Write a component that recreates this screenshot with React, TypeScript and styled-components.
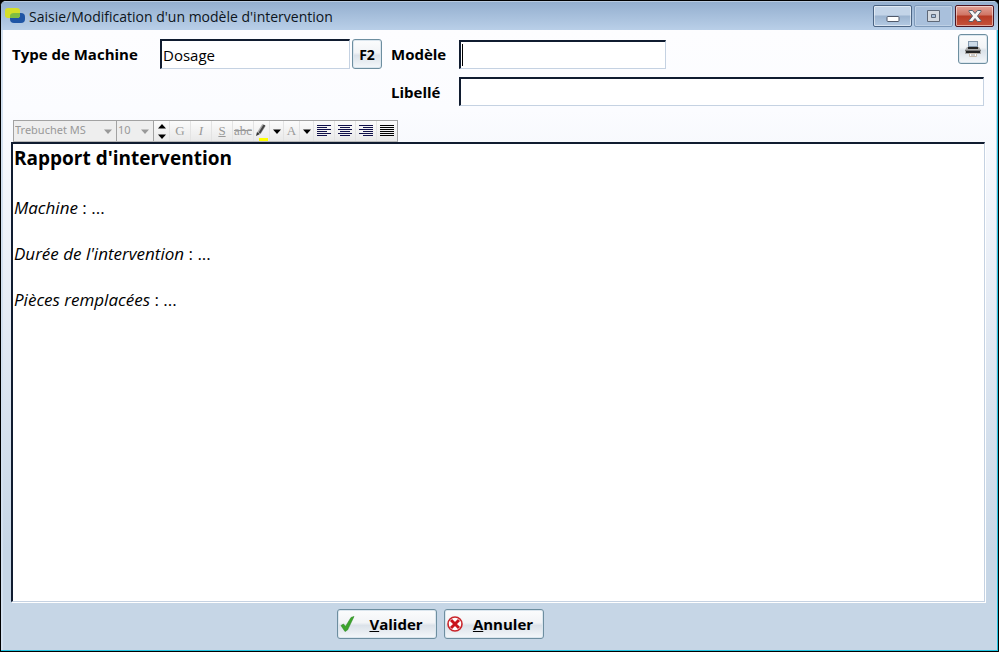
import React from "react";
import styled, { createGlobalStyle, css } from "styled-components";

const Global = createGlobalStyle`
  * { box-sizing: border-box; }
  html, body { margin: 0; background: #000; }
  body { font-family: "Open Sans", "Noto Sans", sans-serif; font-size: 15px; color: #000; }
  button, input, select { font-family: inherit; color: inherit; margin: 0; }
`;

const Window = styled.div`
  display: flex;
  flex-direction: column;
  height: 100vh;
  border: 1px solid #000;
  border-radius: 6px 6px 0 0;
  overflow: hidden;
  background: #c6d6e6;
  box-shadow: inset -1px -1px #22c3e0;
`;

const TitleBar = styled.header`
  display: flex;
  align-items: center;
  height: 29px;
  flex: none;
  gap: 2px;
  padding: 0 4px;
  border-top: 1px solid #b9cbe0;
  background: linear-gradient(#94afcf, #b9cfe8);
`;

const TitleText = styled.h1`
  flex: 1;
  margin: 0;
  padding-top: 2px;
  font-size: 14px;
  line-height: 20px;
  font-weight: 400;
  color: #0c1420;
`;

const Captions = styled.div`
  display: flex;
  align-self: flex-start;
  gap: 2px;
  padding-top: 3px;
`;

const CaptionButton = styled.button<{ $tone?: "close" | "dim" }>`
  display: flex;
  align-items: center;
  justify-content: center;
  width: 39px;
  height: 22px;
  padding: 0;
  border: 1px solid #4b6483;
  border-radius: 2px;
  box-shadow: inset 0 0 0 1px #ffffff80;
  background: linear-gradient(#c3d4e8 45%, #9cb4d0 50%, #b4cae3);
  ${(p) => p.$tone === "dim" && css`
    border-color: #7f9aba;
    background: #a9c0dc;
    box-shadow: inset 0 0 0 1px #ffffff40;
  `}
  ${(p) => p.$tone === "close" && css`
    border-color: #4d1420;
    background: linear-gradient(#e3a297, #d07565 45%, #b73b25 50%, #c5523c);
  `}
`;

const Content = styled.main`
  display: flex;
  flex-direction: column;
  flex: 1;
  min-height: 0;
  margin: 0 2px 1px 0;
  border-left: 2px solid #d3e1f0;
  background: linear-gradient(#fdfdff 0, #fbfcff 80px, #e6ecf5 270px, #c6d6e6 520px);
`;

const FormRow = styled.div<{ $end?: boolean }>`
  display: flex;
  align-items: center;
  height: ${(p) => (p.$end ? 34 : 42)}px;
  padding: ${(p) => (p.$end ? "5px 12px 0 388px" : "7px 8px 1px 9px")};
  flex: none;
`;

const Label = styled.label<{ $wide?: boolean }>`
  flex: none;
  width: ${(p) => (p.$wide ? 148 : 68)}px;
  font-weight: 700;
  line-height: 22px;
`;

const sunken = css`
  border: 1px solid #c5d2e2;
  border-top: 2px solid #101c30;
  border-left: 2px solid #101c30;
  background: #fff;
`;

const TextField = styled.input<{ $size: "small" | "medium" | "fill" }>`
  ${sunken}
  height: ${(p) => (p.$size === "small" ? 30 : 29)}px;
  padding: 0 1px;
  border-radius: 0;
  font-size: 15px;
  outline: none;
  min-width: 0;
  ${(p) => (p.$size === "fill" ? "flex: 1;" : `width: ${p.$size === "small" ? 190 : 207}px;`)}
  &:focus:placeholder-shown {
    caret-color: transparent;
    background: linear-gradient(#000, #000) 1px 50% / 1px 22px no-repeat #fff;
  }
`;

const raised = css`
  border: 1px solid #6d8ea0;
  border-radius: 3px;
  background: linear-gradient(#fbfcfd 0, #f2f4f6 45%, #dbe2e9 55%, #f4f7fa);
  box-shadow: inset 0 0 0 1px #dbe6ee;
`;

const SquareButton = styled.button<{ $push?: boolean }>`
  ${raised}
  display: flex;
  align-items: center;
  justify-content: center;
  flex: none;
  width: 30px;
  height: 30px;
  padding: 0;
  font-size: 14px;
  font-weight: 700;
  ${(p) => (p.$push ? "margin-left: auto; align-self: flex-end; margin-bottom: 7px;" : "margin: 0 9px 0 2px;")}
`;

const Toolbar = styled.div`
  display: flex;
  align-self: flex-start;
  flex: none;
  height: 22px;
  margin: 14px 0 0 10px;
  border: 1px solid #a2a2a2;
  border-bottom-color: #b8b8b8;
  background: linear-gradient(#fbfbfb, #e9e9e9);
`;

const Picker = styled.div<{ $wide?: boolean }>`
  display: flex;
  align-items: center;
  width: ${(p) => (p.$wide ? 103 : 37)}px;
  border-right: 1px solid #a2a2a2;
  background: #eee;
  padding-right: 4px;
`;

const Select = styled.select`
  flex: 1;
  min-width: 0;
  height: 18px;
  padding: 0 0 3px 1px;
  border: 0;
  appearance: none;
  background: transparent;
  font-family: "Noto Sans", sans-serif;
  font-size: 11px;
  opacity: 1;
  color: #999;
`;

const Stepper = styled.div`
  display: flex;
  flex-direction: column;
  width: 15px;
`;

const Tool = styled.button<{ $w?: number; $look?: "italic" | "underline" | "strike" }>`
  display: flex;
  align-items: center;
  justify-content: center;
  width: ${(p) => p.$w ?? 21}px;
  flex: 1 1 auto;
  padding: 0;
  border: 0;
  border-left: 1px solid #e3e3e3;
  background: none;
  font-family: "Liberation Serif", serif;
  font-size: 13px;
  line-height: 16px;
  color: #999;
  font-style: ${(p) => (p.$look === "italic" ? "italic" : "normal")};
  text-decoration: ${(p) =>
    p.$look === "underline" ? "underline" : p.$look === "strike" ? "line-through" : "none"};
`;

const StepButton = styled.button`
  display: flex;
  align-items: center;
  justify-content: center;
  flex: 1;
  padding: 0;
  border: 0;
  background: none;
`;

const Editor = styled.article`
  ${sunken}
  flex: 1;
  min-height: 0;
  margin: 0 11px 0 8px;
  padding: 0 1px;
  font-size: 17px;
  line-height: 23px;
  outline: 0;
  box-shadow: 1px 1px #fff;
  overflow: auto;
`;

const Heading = styled.h2`
  margin: 0 0 24px;
  font-size: 19px;
  line-height: 28px;
  font-weight: 700;
`;

const Entry = styled.p`
  margin: 0 0 23px;
`;

const Footer = styled.footer`
  display: flex;
  flex: none;
  gap: 7px;
  height: 48px;
  padding: 7px 0 0 334px;
`;

const ActionButton = styled.button`
  ${raised}
  display: flex;
  align-items: center;
  width: 100px;
  height: 30px;
  padding: 0 2px;
  font-size: 15px;
  font-weight: 700;
`;

const ActionText = styled.span`
  flex: 1;
  text-align: center;
  padding-left: 2px;
`;

const AppLogo = () => (
  <svg width="22" height="17" viewBox="0 0 22 17" aria-hidden="true">
    <rect x="5" y="5" width="15" height="10" rx="4" fill="#1f55a5" />
    <rect x="0" y="0" width="15" height="10" rx="3" fill="#d5df28" />
    <path d="M5 10V8q0-3 4-3h6v2q0 3-3 3z" fill="#7fbd43" />
  </svg>
);

const PrinterIcon = () => (
  <svg width="16" height="17" viewBox="0 0 16 17" aria-hidden="true">
    <path d="M3 0h10v6H3z" fill="#8498ac" />
    <path d="M4 1h8v4H4z" fill="#ccdbe9" />
    <path d="M2 6h12l2 3v4H0V9z" fill="#aaa" />
    <path d="M3 6h10v2H3zM1 9h14v3H1z" fill="#222" />
    <path d="M0 9.500h16" stroke="#777" />
    <path d="M4.500 12.500h7v3h-7z" fill="#fff" stroke="#c9bcae" />
    <path d="M6 14h4" stroke="#999" />
  </svg>
);

const Arrow = ({ up = false, color = "#000" }: { up?: boolean; color?: string }) => (
  <svg width="8" height="5" viewBox="0 0 8 5" aria-hidden="true">
    <path d={up ? "M0 4.500 4 0l4 4.500z" : "M0 .5h8L4 5z"} fill={color} />
  </svg>
);

const HighlightIcon = () => (
  <svg width="14" height="20" viewBox="0 0 14 20" aria-hidden="true">
    <path d="M4 17h9v3H4z" fill="#ff0" />
    <path d="m4 12 5-8" stroke="#aaa" strokeWidth="4" />
    <path d="m4.500 12 5-8" stroke="#444" strokeWidth="2" />
    <path d="m1 15 1-4 3 2z" fill="#333" />
  </svg>
);

const lineSets: Record<string, number[][]> = {
  left: [[0, 14], [0, 10], [0, 14], [0, 10], [0, 14], [0, 10]],
  center: [[0, 14], [2, 12], [0, 14], [2, 12], [0, 14], [2, 12]],
  right: [[0, 14], [4, 14], [0, 14], [4, 14], [0, 14], [4, 14]],
  justify: [[0, 14], [0, 14], [0, 14], [0, 14], [0, 14], [0, 14]],
};

const AlignIcon = ({ kind }: { kind: string }) => (
  <svg width="14" height="12" viewBox="0 0 14 12" shapeRendering="crispEdges" aria-hidden="true">
    {lineSets[kind].map(([a, b], i) => (
      <rect key={i} x={a} y={i * 2} width={b - a} height="1" fill={kind === "justify" ? "#000" : "#10104a"} />
    ))}
  </svg>
);

const CheckIcon = () => (
  <svg width="16" height="18" viewBox="0 0 16 18" aria-hidden="true">
    <path d="M1 10.500 3.500 9 5.500 11.500 11 2.500 14 1.500 7.500 15 5 16.500z" fill="#3ca52c" stroke="#2f8a27" strokeWidth=".6" />
  </svg>
);

const CancelIcon = () => (
  <svg width="16" height="16" viewBox="0 0 16 16" aria-hidden="true">
    <circle cx="8" cy="8" r="7" fill="#fff" stroke="#c9242a" strokeWidth="1.600" />
    <path d="m4 4 8 8m0-8-8 8" stroke="#c9141b" strokeWidth="3" />
  </svg>
);

export default function App() {
  return (
    <>
      <Global />
      <Window>
        <TitleBar>
          <AppLogo />
          <TitleText>Saisie/Modification d'un modèle d'intervention</TitleText>
          <Captions>
            <CaptionButton aria-label="Réduire">
              <svg width="14" height="16" viewBox="0 0 14 16">
                <rect x="1" y="8.500" width="12" height="5" rx="1" fill="#fff" stroke="#50596a" />
              </svg>
            </CaptionButton>
            <CaptionButton $tone="dim" aria-label="Agrandir">
              <svg width="13" height="12" viewBox="0 0 13 12">
                <path d="M.5.5h12v11H.5zM4.500 4.500v3h4v-3z" fill="#d4d9e0" fillRule="evenodd" stroke="#5e6878" />
              </svg>
            </CaptionButton>
            <CaptionButton $tone="close" aria-label="Fermer">
              <svg width="14" height="12" viewBox="0 0 14 12">
                <path d="M1 .5h3.500L7 3.500 9.500.5H13v1L9.500 6l3.500 4.500v1H9.500L7 8.500l-2.500 3H1v-1L4.500 6 1 1.500z" fill="#f5f5f5" stroke="#56606c" />
              </svg>
            </CaptionButton>
          </Captions>
        </TitleBar>
        <Content>
          <FormRow>
            <Label $wide htmlFor="machine">Type de Machine</Label>
            <TextField $size="small" id="machine" defaultValue="Dosage" />
            <SquareButton>F2</SquareButton>
            <Label htmlFor="modele">Modèle</Label>
            <TextField $size="medium" id="modele" placeholder=" " autoFocus />
            <SquareButton $push aria-label="Imprimer"><PrinterIcon /></SquareButton>
          </FormRow>
          <FormRow $end>
            <Label htmlFor="libelle">Libellé</Label>
            <TextField $size="fill" id="libelle" placeholder=" " />
          </FormRow>
          <Toolbar role="toolbar">
            <Picker $wide>
              <Select disabled aria-label="Police"><option>Trebuchet MS</option></Select>
              <Arrow color="#999" />
            </Picker>
            <Picker>
              <Select disabled aria-label="Taille"><option>10</option></Select>
              <Arrow color="#999" />
            </Picker>
            <Stepper>
              <StepButton aria-label="Augmenter"><Arrow up /></StepButton>
              <StepButton aria-label="Diminuer"><Arrow /></StepButton>
            </Stepper>
            <Tool>G</Tool>
            <Tool $look="italic">I</Tool>
            <Tool $look="underline">S</Tool>
            <Tool $look="strike">abc</Tool>
            <Tool aria-label="Surligner" $w={16}><HighlightIcon /></Tool>
            <Tool aria-label="Couleur de surlignage" $w={14}><Arrow /></Tool>
            <Tool $w={16}>A</Tool>
            <Tool aria-label="Couleur du texte" $w={14}><Arrow /></Tool>
            {Object.keys(lineSets).map((kind) => (
              <Tool key={kind} aria-label={kind}><AlignIcon kind={kind} /></Tool>
            ))}
          </Toolbar>
          <Editor contentEditable suppressContentEditableWarning>
            <Heading>Rapport d'intervention</Heading>
            <Entry><em>Machine</em> : ...</Entry>
            <Entry><em>Durée de l'intervention</em> : ...</Entry>
            <Entry><em>Pièces remplacées</em> : ...</Entry>
          </Editor>
          <Footer>
            <ActionButton><CheckIcon /><ActionText><u>V</u>alider</ActionText></ActionButton>
            <ActionButton><CancelIcon /><ActionText><u>A</u>nnuler</ActionText></ActionButton>
          </Footer>
        </Content>
      </Window>
    </>
  );
}
